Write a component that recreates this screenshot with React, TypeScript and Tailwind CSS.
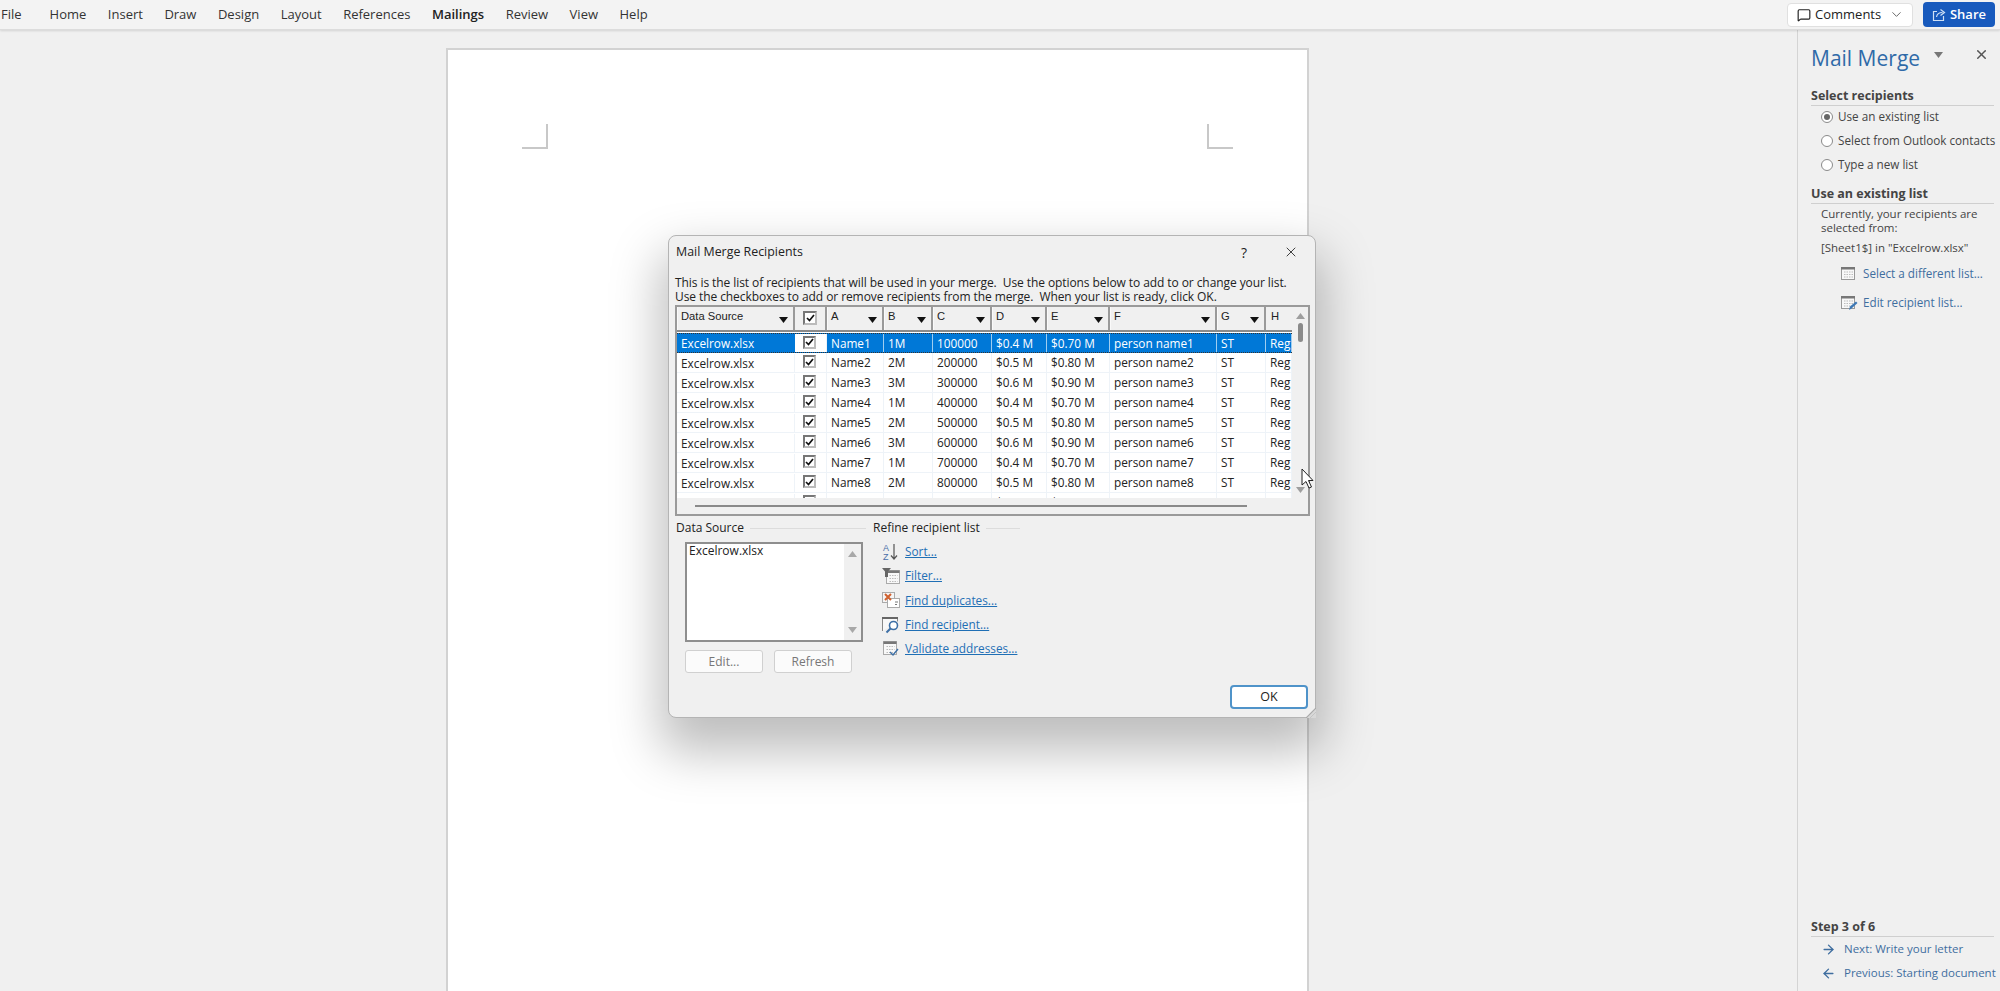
import { ArrowLeft, ArrowRight, ChevronDown, MessageSquare, X } from "lucide-react";

const tabs = ["Home", "Insert", "Draw", "Design", "Layout", "References", "Mailings", "Review", "View", "Help"];

const columns = [
  { label: "A", width: "w-[57px]" },
  { label: "B", width: "w-[49px]" },
  { label: "C", width: "w-[59px]" },
  { label: "D", width: "w-[55px]" },
  { label: "E", width: "w-[63px]" },
  { label: "F", width: "w-[107px]" },
  { label: "G", width: "w-[49px]" },
];

const rows = [
  ["Name1", "1M", "100000", "$0.4 M", "$0.70 M", "person name1", "ST", "Reg"],
  ["Name2", "2M", "200000", "$0.5 M", "$0.80 M", "person name2", "ST", "Reg"],
  ["Name3", "3M", "300000", "$0.6 M", "$0.90 M", "person name3", "ST", "Reg"],
  ["Name4", "1M", "400000", "$0.4 M", "$0.70 M", "person name4", "ST", "Reg"],
  ["Name5", "2M", "500000", "$0.5 M", "$0.80 M", "person name5", "ST", "Reg"],
  ["Name6", "3M", "600000", "$0.6 M", "$0.90 M", "person name6", "ST", "Reg"],
  ["Name7", "1M", "700000", "$0.4 M", "$0.70 M", "person name7", "ST", "Reg"],
  ["Name8", "2M", "800000", "$0.5 M", "$0.80 M", "person name8", "ST", "Reg"],
  ["Name9", "3M", "900000", "$0.6 M", "$0.90 M", "person name9", "ST", "Reg"],
];

const cellWidths = ["w-[57px]", "w-[49px]", "w-[59px]", "w-[55px]", "w-[63px]", "w-[107px]", "w-[49px]", "w-[26px]"];

function Check() {
  return (
    <svg width="9" height="8" viewBox="0 0 9 8" fill="none" stroke="#111" strokeWidth="1.7">
      <path d="M1 4l2.5 2.5L8 1" />
    </svg>
  );
}

function CheckBox({ className }: { className: string }) {
  return (
    <span className={`flex h-[13px] w-[13px] items-center justify-center border-2 border-t-[#777] border-l-[#777] border-r-[#bbb] border-b-[#bbb] bg-white ${className}`}>
      <Check />
    </span>
  );
}

function Triangle({ className, down }: { className: string; down?: boolean }) {
  return (
    <svg width="9" height="6" viewBox="0 0 9 6" className={className}>
      <path d={down ? "M0 0h9L4.5 6z" : "M0 6h9L4.5 0z"} fill="currentColor" />
    </svg>
  );
}

function HeaderCell({ label, width }: { label: string; width: string }) {
  return (
    <div className={`flex h-full shrink-0 items-start border-l border-r-2 border-l-[#fafafa] border-r-[#9a9a9a] bg-[#f0f0f0] pl-[3px] ${width}`}>
      <span className="text-[#222]">{label}</span>
      <Triangle down className="ml-auto mr-[5px] mt-[10px] text-[#111]" />
    </div>
  );
}

function Row({ cells, index }: { cells: string[]; index: number }) {
  const selected = index === 0;
  return (
    <div className={`flex h-[20px] shrink-0 items-center text-[11.8px] ${selected ? "h-[19px] border-y border-dotted border-[#333] bg-[#0078d7] text-white" : "border-b border-[#eef3f8] text-[#222]"}`}>
      <div className={`w-[118px] shrink-0 truncate pl-[4px] border-r leading-[18px] ${selected ? "border-[#0078d7]" : "border-[#eef3f8]"}`}>Excelrow.xlsx</div>
      <div className="flex h-full w-[32px] shrink-0 items-center border-r border-[#eef3f8] bg-white pl-[8px]">
        <CheckBox className="-mt-[2px]" />
      </div>
      {cells.map((cell, i) => (
        <div key={i} className={`h-full shrink-0 overflow-hidden whitespace-nowrap border-r pl-[4px] leading-[18px] ${cellWidths[i]} ${selected ? "border-[#9fcdf0]" : "border-[#eef3f8]"}`}>
          {cell}
        </div>
      ))}
    </div>
  );
}

function RecipientTable() {
  return (
    <div className="relative ml-[6px] mt-[1px] h-[211px] w-[635px] border-2 border-[#9a9a9a] bg-[#f0f0f0]">
      <div className="flex h-full">
        <div className="flex h-full w-[615px] flex-col overflow-hidden">
          <div className="flex h-[25px] shrink-0 border-b-2 border-[#8a8a8a] font-['Liberation_Sans',sans-serif] text-[11.2px] leading-[18px]">
            <HeaderCell label="Data Source" width="w-[118px]" />
            <div className="flex w-[32px] shrink-0 items-center border-r-2 border-[#9a9a9a] pl-[8px]">
              <CheckBox className="-mt-[1px] h-[14px] w-[14px]" />
            </div>
            {columns.map((c) => (
              <HeaderCell key={c.label} label={c.label} width={c.width} />
            ))}
            <div className="w-[26px] shrink-0 bg-[#f0f0f0] pl-[5px] text-[#222]">H</div>
          </div>
          <div className="flex h-[166px] shrink-0 flex-col overflow-hidden bg-white pt-[1px]">
            {rows.map((cells, i) => (
              <Row key={cells[0]} cells={cells} index={i} />
            ))}
          </div>
          <div className="flex flex-1 items-center pl-[18px]">
            <div className="h-[2px] w-[552px] bg-[#8a8a8a]" />
          </div>
        </div>
        <div className="flex w-[16px] flex-col items-center pt-[6px] text-[#9e9e9e]">
          <Triangle className="" />
          <div className="mt-[4px] h-[19px] w-[5px] rounded-full bg-[#8a8a8a]" />
          <Triangle down className="mt-[145px]" />
        </div>
      </div>
    </div>
  );
}

function SortIcon() {
  return (
    <svg width="18" height="18" viewBox="0 0 18 18">
      <text x="1" y="8" fontSize="9" fill="#4a6ea8" fontFamily="Liberation Sans">A</text>
      <text x="1" y="17" fontSize="9" fill="#4a6ea8" fontFamily="Liberation Sans">Z</text>
      <path d="M12 1v15M9 12.5l3 3.5 3-3.5" fill="none" stroke="#555" strokeWidth="1.2" />
    </svg>
  );
}

function GridBody({ x, y, w, h }: { x: number; y: number; w: number; h: number }) {
  return (
    <g>
      <rect x={x} y={y} width={w} height={h} fill="#f8f8f8" stroke="#aaa" />
      <rect x={x} y={y} width={w} height="2.5" fill="#777" />
      <path d={`M${x + 3} ${y + 5}h${w - 5}M${x + 3} ${y + 8}h${w - 5}M${x + 3} ${y + 11}h${w - 5}`} stroke="#bbb" strokeDasharray="1.5 1" />
    </g>
  );
}

function FilterIcon() {
  return (
    <svg width="18" height="18" viewBox="0 0 18 18">
      <GridBody x={4.5} y={3.5} w={13} h={13} />
      <path d="M0 1h9L6 4.5V10H3V4.5z" fill="#666" />
    </svg>
  );
}

function DuplicatesIcon() {
  return (
    <svg width="18" height="18" viewBox="0 0 18 18">
      <rect x="0.5" y="1.5" width="12" height="10" fill="#f5f5f5" stroke="#aaa" />
      <rect x="5.5" y="7.5" width="12" height="9" fill="#fff" stroke="#aaa" />
      <path d="M3 3l6 6M9 3L3 9" stroke="#d0612f" strokeWidth="2" />
      <path d="M13 11h3M13 13.5h2" stroke="#777" />
    </svg>
  );
}

function FindIcon() {
  return (
    <svg width="18" height="18" viewBox="0 0 18 18">
      <path d="M.5 15V1.5h15v4" fill="#f8f8f8" stroke="#888" />
      <rect x="0" y="1" width="16" height="2" fill="#666" />
      <circle cx="11.5" cy="9.5" r="4" fill="#fff" stroke="#3d6fa5" strokeWidth="1.6" />
      <path d="M8.5 12.5l-4 4" stroke="#3d6fa5" strokeWidth="2" />
    </svg>
  );
}

function ValidateIcon() {
  return (
    <svg width="18" height="18" viewBox="0 0 18 18">
      <GridBody x={1.5} y={1.5} w={13} h={13} />
      <path d="M8 12l3 3 5-6" fill="none" stroke="#3d6fa5" strokeWidth="1.4" />
    </svg>
  );
}

const refineLinks = [
  { label: "Sort...", icon: <SortIcon /> },
  { label: "Filter...", icon: <FilterIcon /> },
  { label: "Find duplicates...", icon: <DuplicatesIcon /> },
  { label: "Find recipient...", icon: <FindIcon /> },
  { label: "Validate addresses...", icon: <ValidateIcon /> },
];

function GroupLabel({ label, lineWidth }: { label: string; lineWidth: string }) {
  return (
    <div className="flex items-center gap-[6px] text-[12px] leading-[16px] text-[#222]">
      <span>{label}</span>
      <span className={`h-px bg-[#dcdcdc] ${lineWidth}`} />
    </div>
  );
}

function MailMergeDialog() {
  return (
    <div className="absolute left-[668px] top-[235px] h-[483px] w-[648px] rounded-[8px] border border-[#b4b4b4] bg-[#f0f0f0] shadow-[0_26px_50px_8px_rgba(0,0,0,0.26)]">
      <div className="flex h-[31px] items-center pl-[7px] pr-[16px] pt-[2px] text-[12.4px] text-[#222]">
        <span>Mail Merge Recipients</span>
        <span className="ml-auto text-[14px]">?</span>
        <X className="-mt-[2px] ml-[36px] h-[16px] w-[16px] text-[#333]" strokeWidth={1.4} />
      </div>
      <div className="mt-[9px] pl-[6px] text-[12px] leading-[14px] tracking-[-0.08px] text-[#222]">
        <p className="whitespace-pre">This is the list of recipients that will be used in your merge.  Use the options below to add to or change your list.</p>
        <p className="whitespace-pre">Use the checkboxes to add or remove recipients from the merge.  When your list is ready, click OK.</p>
      </div>
      <RecipientTable />
      <div className="mt-[4px] flex pl-[7px]">
        <div className="w-[197px]">
          <GroupLabel label="Data Source" lineWidth="w-[116px]" />
          <div className="ml-[9px] mt-[6px] flex h-[100px] w-[178px] border-2 border-[#8e8e8e] bg-white">
            <span className="flex-1 pl-[2px] text-[12px] leading-[14px] text-[#222]">Excelrow.xlsx</span>
            <div className="flex w-[17px] flex-col items-center justify-between bg-[#f0f0f0] py-[7px] text-[#a8a8a8]">
              <Triangle className="" />
              <Triangle down />
            </div>
          </div>
          <div className="ml-[9px] mt-[8px] flex gap-[11px] text-[12px]">
            <button className="h-[23px] w-[78px] rounded-[3px] border border-[#d0d0d0] bg-[#fbfbfb] text-[#777]">Edit...</button>
            <button className="h-[23px] w-[78px] rounded-[3px] border border-[#d0d0d0] bg-[#fbfbfb] text-[#777]">Refresh</button>
          </div>
        </div>
        <div>
          <GroupLabel label="Refine recipient list" lineWidth="w-[34px]" />
          <ul className="ml-[9px] mt-[4px]">
            {refineLinks.map((link) => (
              <li key={link.label} className="flex h-[24.2px] items-center gap-[5px]">
                {link.icon}
                <span className="text-[11.8px] text-[#1f6fb5] underline">{link.label}</span>
              </li>
            ))}
          </ul>
        </div>
      </div>
      <button className="absolute bottom-[8px] right-[7px] h-[24px] w-[78px] rounded-[4px] border-2 border-[#4f93c9] bg-white text-[12.5px] text-[#222]">OK</button>
      {/* resize grip cuts the corner */}
      <svg className="absolute -bottom-px -right-px" width="10" height="10" viewBox="0 0 10 10">
        <path d="M10 0v10H0z" fill="#d8d8d8" />
        <path d="M0 10L10 0" stroke="#a8a8a8" strokeWidth="1.2" />
        <path d="M4 10l6-6" stroke="#c4c4c4" />
      </svg>
    </div>
  );
}

function Radio({ checked, label }: { checked?: boolean; label: string }) {
  return (
    <div className="flex h-[24px] items-center gap-[5px] pl-[10px]">
      <span className="flex h-[12px] w-[12px] shrink-0 items-center justify-center rounded-full border border-[#8a8a8a] bg-white">
        {checked && <span className="h-[6px] w-[6px] rounded-full bg-[#666]" />}
      </span>
      <span className="whitespace-nowrap">{label}</span>
    </div>
  );
}

function SectionTitle({ label }: { label: string }) {
  return <div className="border-b border-[#cfcfcf] pb-[1px] text-[12.5px] font-bold leading-[16px] text-[#444]">{label}</div>;
}

function ListIcon({ pen }: { pen?: boolean }) {
  return (
    <svg width="18" height="16" viewBox="0 0 18 16">
      <rect x="1.5" y="1.5" width="13" height="12" fill="#f8f8f8" stroke="#999" />
      <rect x="1" y="1" width="14" height="2.5" fill="#777" />
      <path d="M4 6h9M4 8.5h9M4 11h9" stroke="#bbb" strokeDasharray="1.5 1" />
      {pen && <path d="M9 15l1-3.5 6-5 1.5 1.5-6 5.5z" fill="#3d78b5" />}
    </svg>
  );
}

function TaskPane() {
  return (
    <aside className="relative flex w-[203px] shrink-0 flex-col border-l border-[#d4d4d4] bg-[#f0f0f0] pl-[13px] pr-[6px] text-[11.7px] text-[#444]">
      <div className="flex h-[50px] items-center pt-[8px]">
        <span className="text-[21px] text-[#2f6aa8]">Mail Merge</span>
        <Triangle down className="ml-[14px] -mt-[8px] text-[#777]" />
        <X className="ml-auto mr-[5px] -mt-[9px] h-[15px] w-[15px] text-[#555]" strokeWidth={2.4} />
      </div>
      <div className="mt-[8px]">
        <SectionTitle label="Select recipients" />
        <div className="-mt-[1px]">
          <Radio checked label="Use an existing list" />
          <Radio label="Select from Outlook contacts" />
          <Radio label="Type a new list" />
        </div>
      </div>
      <div className="mt-[9px]">
        <SectionTitle label="Use an existing list" />
        <div className="pl-[10px] pt-[3px] text-[11.5px]">
          <p className="leading-[14px]">Currently, your recipients are selected from:</p>
          <p className="mt-[6px] leading-[14px]">[Sheet1$] in "Excelrow.xlsx"</p>
        </div>
        <div className="mt-[4px] flex h-[29px] items-center gap-[5px] pl-[29px] text-[#3f6e9f]">
          <ListIcon />
          <span>Select a different list...</span>
        </div>
        <div className="flex h-[29px] items-center gap-[5px] pl-[29px] text-[#3f6e9f]">
          <ListIcon pen />
          <span>Edit recipient list...</span>
        </div>
      </div>
      <div className="mt-auto pb-[6px]">
        <SectionTitle label="Step 3 of 6" />
        <div className="flex h-[24px] items-center gap-[8px] pl-[10px] text-[11.5px] text-[#3f6e9f]">
          <ArrowRight className="h-[15px] w-[15px] shrink-0" strokeWidth={2.2} />
          <span>Next: Write your letter</span>
        </div>
        <div className="flex h-[24px] items-center gap-[8px] pl-[10px] text-[11.5px] text-[#3f6e9f]">
          <ArrowLeft className="h-[15px] w-[15px] shrink-0" strokeWidth={2.2} />
          <span className="whitespace-nowrap">Previous: Starting document</span>
        </div>
      </div>
    </aside>
  );
}

export default function App() {
  return (
    <div className="relative flex h-[991px] w-[2000px] flex-col overflow-hidden bg-[#f0f0f0] font-['Open_Sans',sans-serif]">
      <header className="z-10 flex h-[30px] shrink-0 items-center border-b border-[#dcdcdc] bg-[#f3f3f3] pl-[1px] pr-[5px] text-[13px] text-[#333] shadow-[0_1px_2px_rgba(0,0,0,0.12)]">
        <span className="mr-[28px]">File</span>
        <nav className="flex gap-[21.5px]">
          {tabs.map((tab) => (
            <span key={tab} className={tab === "Mailings" ? "font-semibold text-[#222]" : ""}>
              {tab}
            </span>
          ))}
        </nav>
        <div className="ml-auto flex h-[24px] w-[126px] items-center rounded-[4px] border border-[#e0e0e0] bg-white pl-[9px] text-[#222]">
          <MessageSquare className="h-[14px] w-[14px]" />
          <span className="ml-[4px] font-medium">Comments</span>
          <ChevronDown className="ml-auto mr-[8px] h-[15px] w-[15px] text-[#555]" strokeWidth={1.4} />
        </div>
        <div className="ml-[10px] flex h-[25px] w-[72px] items-center justify-center gap-[4px] rounded-[4px] bg-[#185abd] font-semibold text-white">
          <svg width="14" height="14" viewBox="0 0 14 14" fill="none" stroke="#cfe0f5" strokeWidth="1.2">
            <path d="M5 3.5H1.5v9h10V8" />
            <path d="M4.5 9c.5-3 3-4.5 6-4.5M8.5 1.5l4 3-4 3" />
          </svg>
          <span>Share</span>
        </div>
      </header>
      <div className="flex min-h-0 flex-1">
        <main className="min-w-0 flex-1 overflow-hidden pl-[446px] pt-[18px]">
          <div className="flex h-full w-[863px] justify-between border-x-2 border-t-2 border-[#d2d2d2] bg-white px-[74px] pt-[74px]">
            <div className="h-[25px] w-[26px] border-b-2 border-r-2 border-[#c8c8c8]" />
            <div className="h-[25px] w-[26px] border-b-2 border-l-2 border-[#c8c8c8]" />
          </div>
        </main>
        <TaskPane />
      </div>
      <MailMergeDialog />
      <svg className="absolute left-[1301px] top-[468px]" width="13" height="21" viewBox="0 0 13 21">
        <path d="M1 1v16l4-3.5 3 6.5 2.5-1-3-6.5H12z" fill="#fff" stroke="#222" strokeWidth="1" />
      </svg>
    </div>
  );
}
